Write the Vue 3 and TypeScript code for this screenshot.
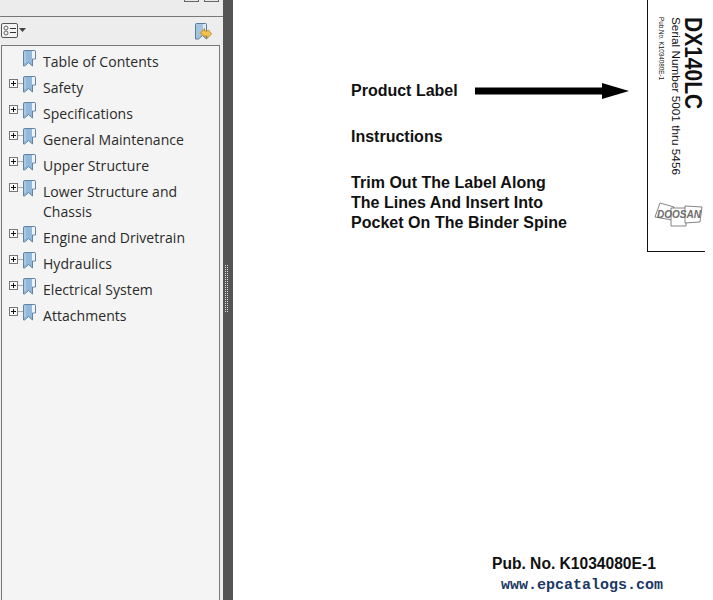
<script setup lang="ts">
const bookmarks: { label: string; expandable: boolean }[] = [
  { label: 'Table of Contents', expandable: false },
  { label: 'Safety', expandable: true },
  { label: 'Specifications', expandable: true },
  { label: 'General Maintenance', expandable: true },
  { label: 'Upper Structure', expandable: true },
  { label: 'Lower Structure and Chassis', expandable: true },
  { label: 'Engine and Drivetrain', expandable: true },
  { label: 'Hydraulics', expandable: true },
  { label: 'Electrical System', expandable: true },
  { label: 'Attachments', expandable: true },
]
</script>

<template>
  <div class="app">
    <aside class="panel">
      <div class="titlebar">
        <span class="tb-btn"></span>
        <span class="tb-btn"></span>
      </div>
      <div class="toolbar">
        <div class="options">
          <svg width="25" height="16" viewBox="0 0 25 16">
            <rect x=".5" y=".5" width="16" height="14" rx="1.500" fill="#f4f4f4" stroke="#555" />
            <circle cx="5" cy="5" r="2" fill="none" stroke="#666" />
            <circle cx="5" cy="10" r="2" fill="none" stroke="#666" />
            <path d="M9 5.500h6M9 9.500h6" stroke="#333" />
            <path d="M18 5h7l-3.500 4z" fill="#444" />
          </svg>
        </div>
        <svg class="expand" width="17" height="17" viewBox="0 0 17 17">
          <path d="M.5 1.500a1 1 0 0 1 1-1h9a1 1 0 0 1 1 1V16l-4-3.500L3.500 16h-3z" fill="#a3c3de" stroke="#5d7c99" />
          <path d="M8 1h3v7H8z" fill="#dfe9f2" />
          <path d="M5.500 10l4-4.500v2.500h2.500l1.500-1 3 4-4.500 4.500v-2.500H8z" fill="#f3c14f" stroke="#b77f1e" stroke-width=".8" />
        </svg>
      </div>
      <div class="tree">
        <div v-for="b in bookmarks" :key="b.label" class="row">
          <div class="gutter">
            <svg v-if="b.expandable" class="plus" width="14" height="9" viewBox="0 0 14 9">
              <rect x=".5" y=".5" width="8" height="8" fill="#fafafa" stroke="#777" />
              <path d="M2 4.500h5M4.500 2v5" stroke="#111" />
              <path d="M9 4.500h5" stroke="#aaa" />
            </svg>
          </div>
          <svg class="mark" width="13" height="17" viewBox="0 0 13 17">
            <path d="M.5 1.500a1 1 0 0 1 1-1h10a1 1 0 0 1 1 1V9h-3v7l-4-3.500L1.500 16h-1z" fill="#93b9da" stroke="#55799c" stroke-width=".9" />
            <path d="M9 1h3v7.500H9z" fill="#eef4f9" />
            <path d="M2 2v11" stroke="#c4d9ea" />
          </svg>
          <span class="label">{{ b.label }}</span>
        </div>
      </div>
    </aside>
    <div class="splitter"><span class="grip"></span></div>
    <main class="page">
      <div class="instructions">
        <div class="product">
          <span>Product Label</span>
          <svg width="155" height="16" viewBox="0 0 155 16">
            <path d="M0 4.500h127V0l27 8-27 8v-4.500H0z" fill="#000" />
          </svg>
        </div>
        <p>Instructions</p>
        <p class="steps">Trim Out The Label Along<br />The Lines And Insert Into<br />Pocket On The Binder Spine</p>
      </div>
      <div class="footer">
        <div class="pub">Pub. No. K1034080E-1</div>
        <div class="site">www.epcatalogs.com</div>
      </div>
      <section class="spine">
        <div class="spine-text">
          <div class="model">DX140LC</div>
          <div class="serial">Serial Number 5001 thru 5456</div>
          <div class="pubno">Pub.No. K1034080E-1</div>
        </div>
        <svg class="logo" width="50" height="25" viewBox="0 0 50 25">
          <g fill="#fff" stroke="#666" stroke-width=".8">
            <path d="M6 1l14 4-2 13L1 15z" />
            <path d="M17 6h15v18H17z" />
            <path d="M31 4l17 1-2 15-15 1z" />
          </g>
          <text x="25" y="16" text-anchor="middle" class="logo-text">DOOSAN</text>
        </svg>
      </section>
    </main>
  </div>
</template>

<style>
html, body { margin: 0; background: #fff; overflow: hidden; }
</style>

<style scoped>
.app {
  display: flex;
  width: 713px;
  height: 600px;
  overflow: hidden;
  font-family: "Liberation Sans", Arial, sans-serif;
}
.panel {
  width: 223px;
  flex: none;
  display: flex;
  flex-direction: column;
  background: #f0f0f0;
}
.titlebar {
  height: 17px;
  flex: none;
  box-sizing: border-box;
  border-bottom: 1px solid #777;
  display: flex;
  justify-content: flex-end;
  gap: 5px;
  padding-right: 4px;
  background: #ececec;
}
.tb-btn {
  width: 15px;
  height: 2px;
  box-sizing: border-box;
  border: 1px solid #666;
  border-top: 0;
  background: #e8e8e8;
}
.toolbar {
  height: 28px;
  flex: none;
  display: flex;
  justify-content: space-between;
  align-items: flex-start;
  padding: 6px 11px 0 1px;
  box-sizing: border-box;
  background: #ededed;
}
.options { display: flex; }
.tree {
  flex: 1;
  margin: 0 3px 0 1px;
  padding-top: 5px;
  box-sizing: border-box;
  background: #f4f4f4;
  border: 1px solid #777;
  border-bottom: 0;
}
.row {
  display: flex;
  align-items: flex-start;
  margin-bottom: 6px;
}
.gutter {
  width: 21px;
  height: 17px;
  flex: none;
  padding: 2px 0 0 7px;
  box-sizing: border-box;
}
.plus { display: block; width: 14px; }
.mark { flex: none; margin-top: -1px; }
.label {
  margin-left: 7px;
  width: 160px;
  padding-top: 1px;
  margin-bottom: -1px;
  font-family: "Open Sans", sans-serif;
  font-size: 14px;
  letter-spacing: 0.050px;
  line-height: 20px;
  color: #2a2a2a;
}
.splitter {
  width: 10px;
  flex: none;
  background: #555;
  padding: 265px 0 0 1px;
  box-sizing: border-box;
}
.grip {
  display: block;
  width: 4px;
  height: 47px;
  background-image: conic-gradient(#ddd 25%, transparent 0);
  background-size: 2px 2px;
}
.page {
  flex: 1;
  position: relative;
  background: #fff;
  display: flex;
  flex-direction: column;
  padding: 81px 0 4px 118px;
  box-sizing: border-box;
}
.instructions {
  font-size: 16px;
  font-weight: 700;
  line-height: 20px;
  color: #111;
}
.product {
  display: flex;
  align-items: center;
  gap: 17px;
}
.instructions p { margin: 26px 0 0; }
.instructions .steps { letter-spacing: 0.030px; }
.footer {
  margin-top: auto;
  padding-left: 141px;
}
.pub {
  font-size: 15.600px;
  font-weight: 700;
  line-height: 20px;
  color: #111;
}
.site {
  margin: 2px 0 0 9px;
  font-family: "Liberation Mono", monospace;
  font-size: 15px;
  font-weight: 700;
  line-height: 20px;
  color: #1c3763;
}
.spine {
  position: absolute;
  top: 0;
  left: 414px;
  width: 58px;
  height: 252px;
  box-sizing: border-box;
  border-left: 1px solid #111;
  border-bottom: 1px solid #111;
  display: flex;
  flex-direction: column;
  justify-content: space-between;
  padding: 17px 0 24px 0;
  align-items: flex-end;
  color: #111;
}
.spine-text {
  writing-mode: vertical-rl;
  display: flex;
  flex-direction: column;
  gap: 0;
}
.model {
  font-size: 21px;
  font-weight: 700;
  line-height: 24px;
  transform: translateX(2px) scaleX(1.180);
  transform-origin: right center;
}
.serial { font-size: 11.800px; line-height: 14px; margin-right: -2px; }
.pubno { font-size: 6.300px; line-height: 12px; margin-right: 2px; }
.logo { display: block; margin-right: 1px; }
.logo-text {
  font: italic 700 10px "Liberation Sans", sans-serif;
  fill: #6c6c6c;
}
</style>
